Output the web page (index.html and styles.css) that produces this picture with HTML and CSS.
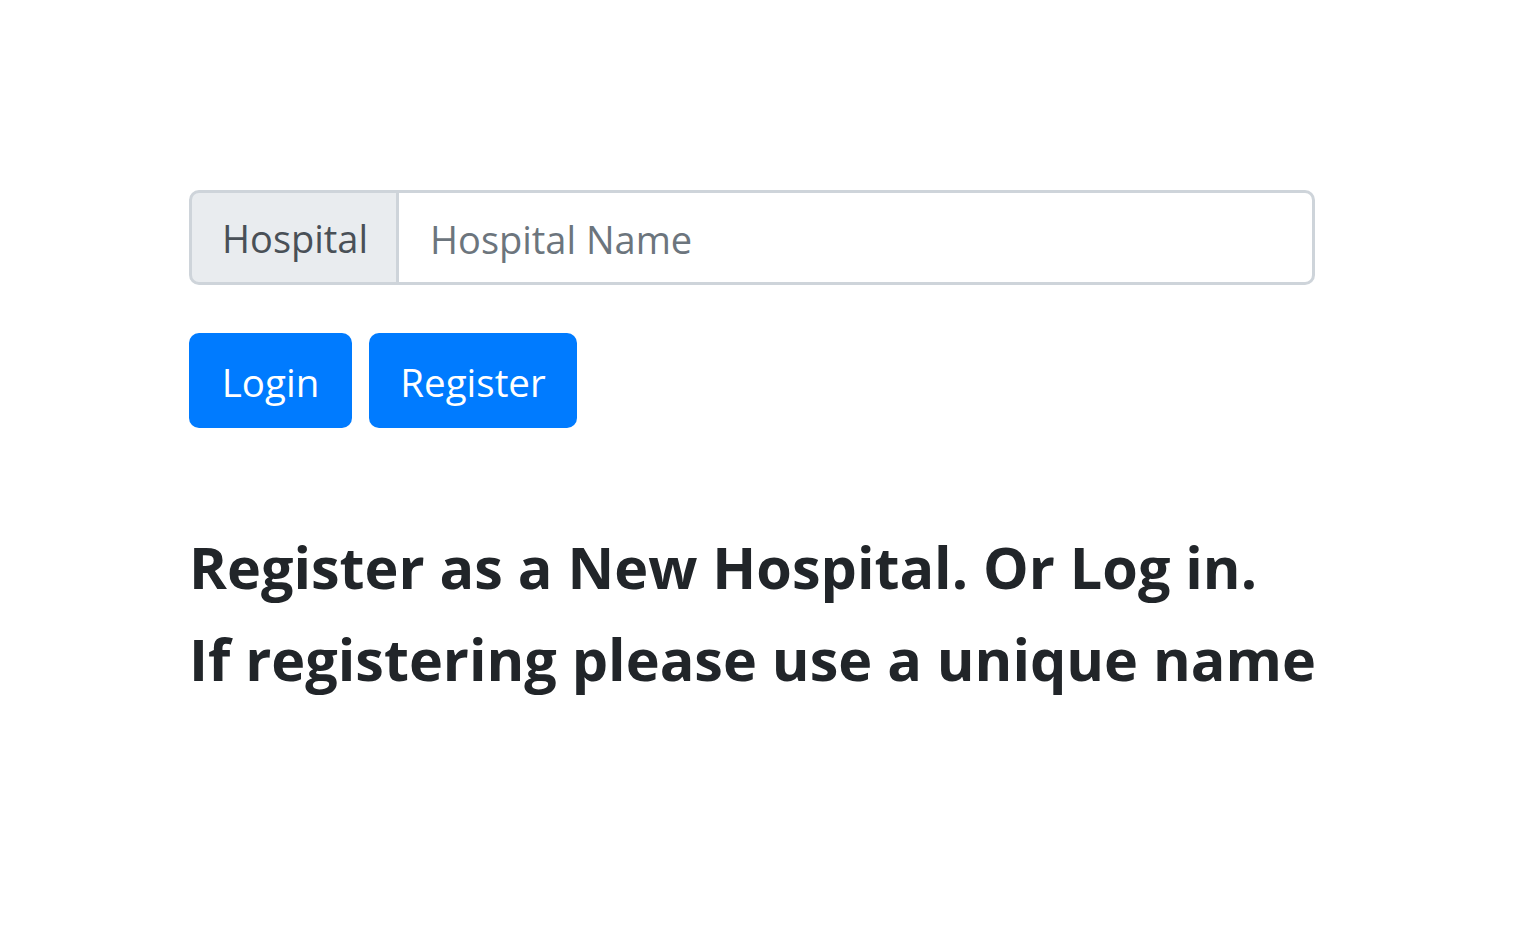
FILE: index.html
```html
<!DOCTYPE html>
<html>
<head>
<meta charset="utf-8">
<link rel="stylesheet" href="styles.css">
</head>
<body>
<main class="wrap">
  <div class="input-group">
    <span class="addon">Hospital</span>
    <input class="field" type="text" placeholder="Hospital Name">
  </div>
  <div class="actions">
    <button class="btn">Login</button>
    <button class="btn">Register</button>
  </div>
  <h4 class="note">Register as a New Hospital. Or Log in.</h4>
  <h4 class="note">If registering please use a unique name</h4>
</main>
</body>
</html>
```
FILE: styles.css
```css
html, body {
  margin: 0;
  padding: 0;
  background: #fff;
}
body {
  font-family: "Open Sans", "Noto Sans", sans-serif;
  color: #212529;
}
.wrap {
  width: 1126px;
  padding: 190px 0 0 189px;
}
.input-group {
  display: flex;
  height: 95px;
  box-sizing: border-box;
}
.addon {
  display: flex;
  align-items: center;
  box-sizing: border-box;
  width: 210px;
  padding: 0 28px 0 30px;
  background: #e9ecef;
  border: 3px solid #ced4da;
  border-radius: 10px 0 0 10px;
  color: #495057;
  font-size: 38px;
}
.field {
  flex: 1;
  box-sizing: border-box;
  height: 95px;
  margin: 0;
  border: 3px solid #ced4da;
  border-left: 0;
  border-radius: 0 10px 10px 0;
  padding: 2px 30px 0 31px;
  font-family: inherit;
  font-size: 38px;
  color: #495057;
  outline: none;
  background: #fff;
}
.field::placeholder {
  color: #6c757d;
}
.actions {
  display: flex;
  gap: 17px;
  margin-top: 48px;
}
.btn {
  height: 95px;
  box-sizing: border-box;
  padding: 2px 0 0;
  border: 0;
  border-radius: 10px;
  background: #007bff;
  color: #fff;
  font-family: inherit;
  font-size: 38.5px;
}
.btn:first-child { width: 163px; }
.btn:last-child { width: 208px; }
.note {
  margin: 0;
  font-size: 57.5px;
  font-weight: 700;
  line-height: 92px;
  color: #212529;
  white-space: nowrap;
}
.note:first-of-type {
  margin-top: 93px;
}
```
